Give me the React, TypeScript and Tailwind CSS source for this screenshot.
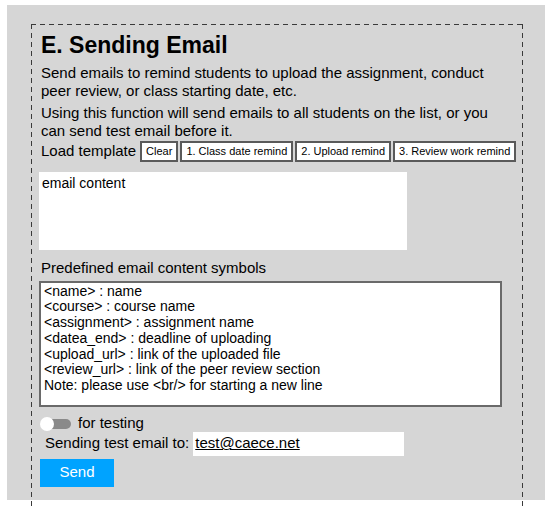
import React from "react";

const font = { fontFamily: '"Liberation Sans", Arial, Helvetica, sans-serif' };

function Btn({ children }: { children: React.ReactNode }) {
  return (
    <button className="h-[21px] px-[4px] bg-white border-2 border-[#5a5a5a] text-[11px] leading-[15px] text-black whitespace-nowrap">
      {children}
    </button>
  );
}

export default function App() {
  const symbols = [
    "<name> : name",
    "<course> : course name",
    "<assignment> : assignment name",
    "<datea_end> : deadline of uploading",
    "<upload_url> : link of the uploaded file",
    "<review_url> : link of the peer review section",
    "Note: please use <br/> for starting a new line",
  ];
  return (
    <div className="w-[550px] h-[506px] bg-white overflow-hidden text-black" style={font}>
      <div className="ml-[7px] mt-[5px] w-[538px] h-[495px] bg-[#d6d6d6] pt-[19px] pl-[24px]">
        <div className="w-[492px] h-[520px] pl-[10px] pt-[7px] [background:repeating-linear-gradient(90deg,#3a3a3a_0_5px,transparent_5px_9px)_top_left/100%_1px_no-repeat,repeating-linear-gradient(180deg,#3a3a3a_0_5px,transparent_5px_9px)_top_left/1px_100%_no-repeat,repeating-linear-gradient(180deg,#3a3a3a_0_5px,transparent_5px_9px)_top_right/1px_100%_no-repeat]">
          <h1 className="text-[23px] font-bold leading-[28px]">E. Sending Email</h1>
          <p className="mt-[5px] w-[462px] text-[15px] leading-[17.5px]">
            Send emails to remind students to upload the assignment, conduct peer review, or class starting date, etc.
          </p>
          <p className="mt-[5px] w-[462px] text-[15px] leading-[17.5px]">
            Using this function will send emails to all students on the list, or you can send test email before it.
          </p>
          <div className="mt-[1px] flex items-center gap-[2px] text-[15px]">
            <span className="mr-[2px]">Load template</span>
            <Btn>Clear</Btn>
            <Btn>1. Class date remind</Btn>
            <Btn>2. Upload remind</Btn>
            <Btn>3. Review work remind</Btn>
          </div>
          <div className="mt-[9px] -ml-[2px] w-[368px] h-[78px] bg-white px-[3px] pt-[3px] text-[14px] leading-[17px]">
            email content
          </div>
          <div className="mt-[9px] text-[15px] leading-[18px]">Predefined email content symbols</div>
          <div className="mt-[4px] -ml-[2px] w-[463px] h-[126px] bg-white border-2 border-[#6a6a6a] px-[3px] pt-[1px] text-[14px] leading-[15.8px]">
            {symbols.map((s) => (
              <div key={s}>{s}</div>
            ))}
          </div>
          <div className="mt-[9px] flex items-center h-[16px]">
            <div className="relative w-[30px] h-[10px] rounded-full bg-[#8a8a8a]">
              <div className="absolute -left-[1px] -top-[2px] w-[14px] h-[14px] rounded-full bg-white" />
            </div>
            <span className="ml-[7px] text-[15px]">for testing</span>
          </div>
          <div className="mt-0 flex items-center">
            <span className="ml-[4px] text-[15px]">Sending test email to:</span>
            <div className="ml-[4px] w-[211px] h-[24px] bg-white flex items-center pl-[2px] text-[15px]">
              <span className="underline">test@caece.net</span>
            </div>
          </div>
          <button className="mt-[3px] -ml-[1px] w-[74px] h-[28px] bg-[#00a3ff] text-white text-[15px]">
            Send
          </button>
        </div>
      </div>
    </div>
  );
}
